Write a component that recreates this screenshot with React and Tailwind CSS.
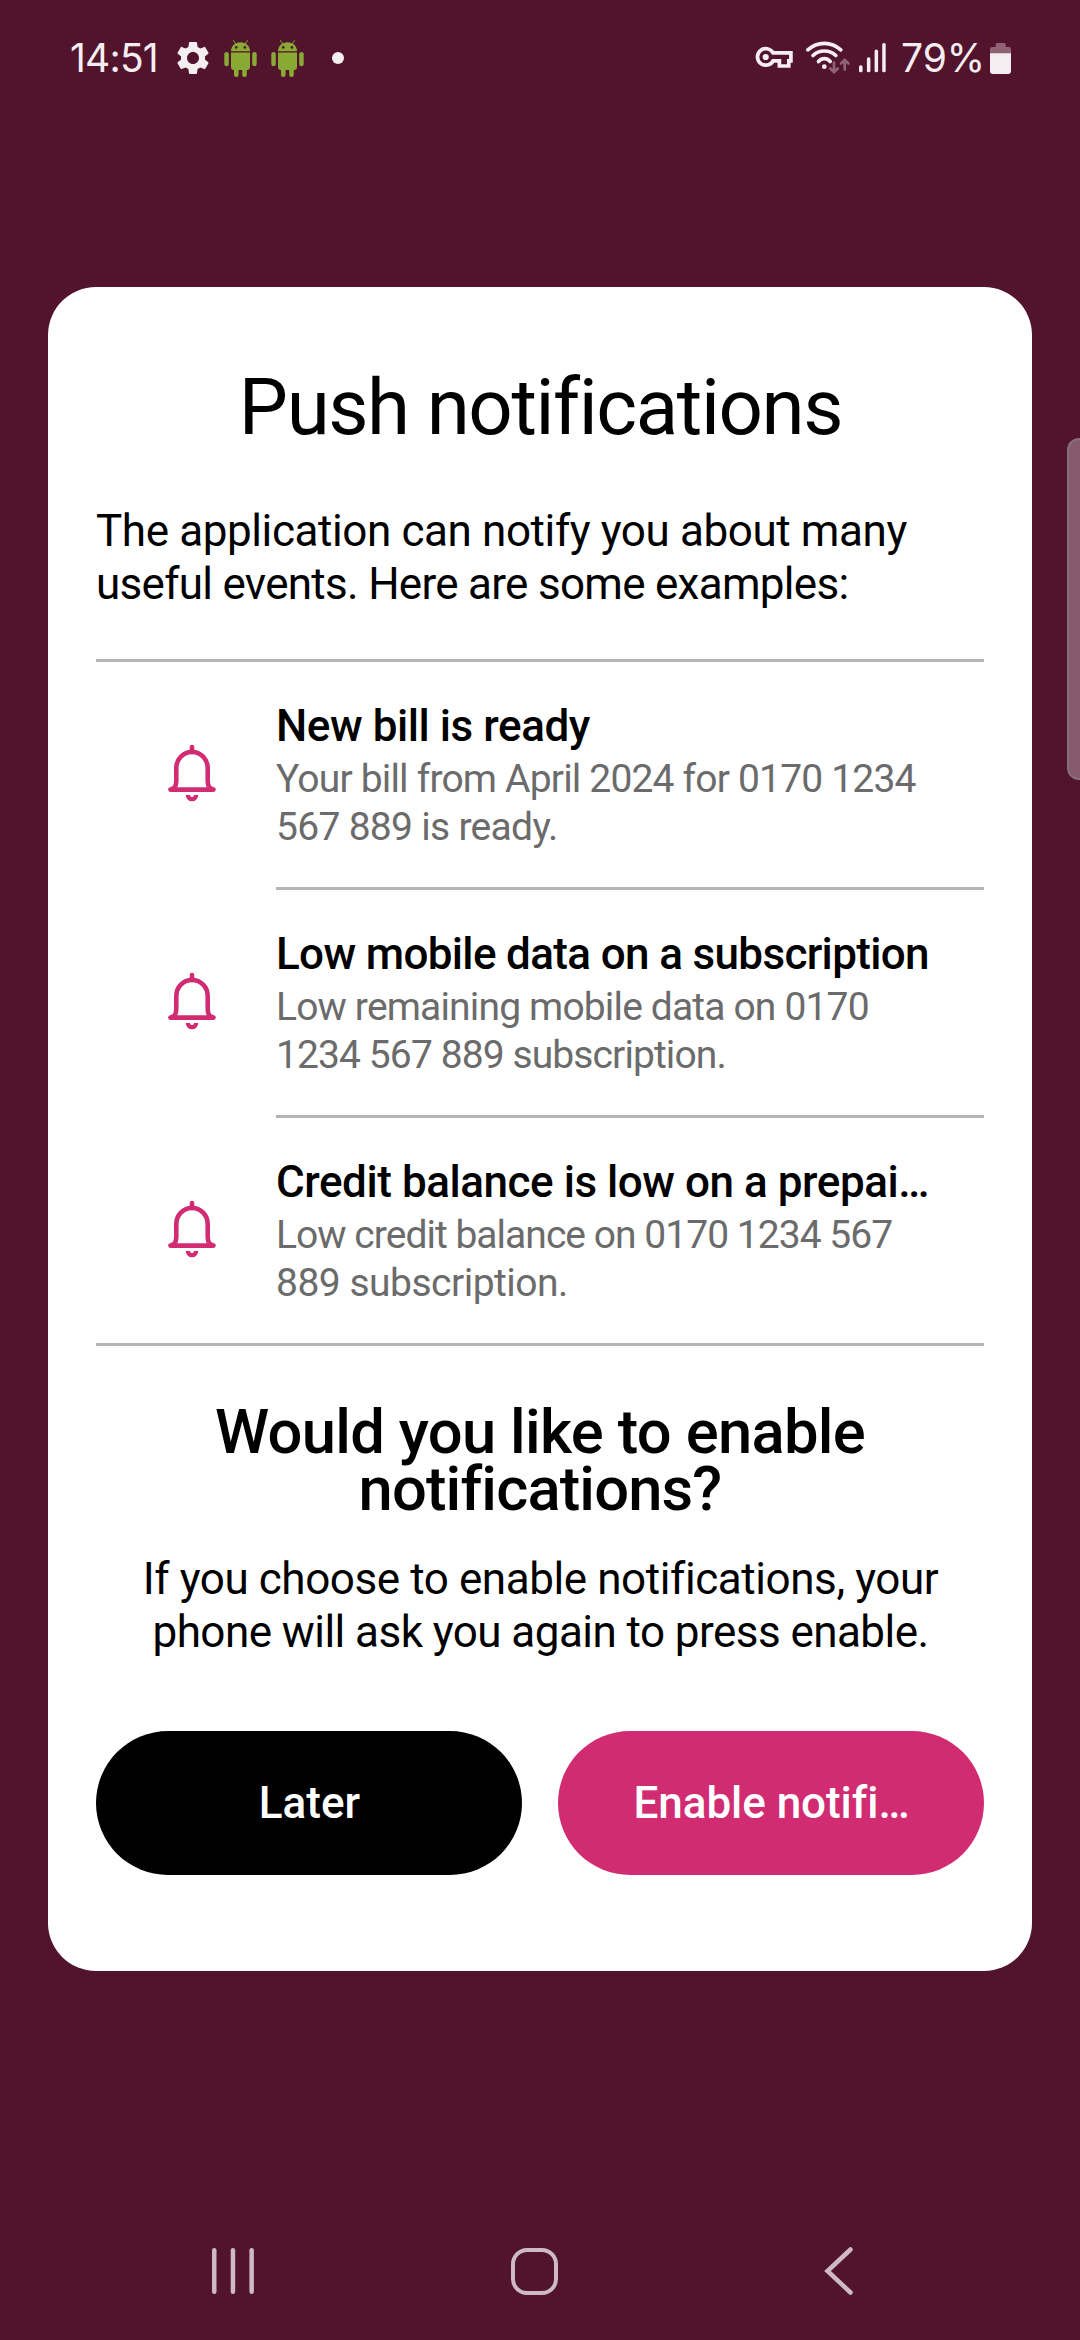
import { MdSettings } from "react-icons/md";

function Bell() {
  return (
    <svg className="mt-[82px] ml-[72px] h-[58px] w-12 shrink-0" viewBox="0 0 48 58" fill="none">
      <path d="M24 3V8" stroke="#d12b72" strokeWidth="4.6" strokeLinecap="round" />
      <path
        d="M24 8C15.3 8 8.3 15 8.3 24V36C8.3 41.5 7.5 44.4 2.5 45.6H45.5C40.5 44.4 39.7 41.5 39.7 36V24C39.7 15 32.7 8 24 8Z"
        stroke="#d12b72"
        strokeWidth="4.6"
        strokeLinejoin="round"
      />
      <path d="M17.7 51H22a2 2 0 0 0 4 0h4.3a6.3 6.3 0 0 1-12.6 0z" fill="#d12b72" />
    </svg>
  );
}

function Robot({ className }) {
  return (
    <svg className={className} viewBox="0 0 33 37" fill="#88aa35">
      <path d="M9.6 0.6L12 4.4M23.4 0.6L21 4.4" stroke="#88aa35" strokeWidth="1" strokeLinecap="round" />
      <path d="M7 11.2C7 6 11.2 2.3 16.5 2.3S26 6 26 11.2Z" />
      <circle cx="12.3" cy="7.4" r="1.3" fill="#52132c" />
      <circle cx="20.9" cy="7.4" r="1.3" fill="#52132c" />
      <path d="M7 12.4H26V27.6A2.4 2.4 0 0 1 23.6 30H9.4A2.4 2.4 0 0 1 7 27.6Z" />
      <rect x="0.3" y="12" width="4.5" height="14.3" rx="2.25" />
      <rect x="28.2" y="12" width="4.5" height="14.3" rx="2.25" />
      <rect x="10" y="26" width="4.6" height="11" rx="2.2" />
      <rect x="18.2" y="26" width="4.6" height="11" rx="2.2" />
    </svg>
  );
}

function StatusBar() {
  return (
    <div className="flex h-[116px] items-center pl-[70px] font-['Inter',sans-serif] text-[39px] leading-[48px] text-[#f4eef1]">
      <span className="w-[104px] whitespace-nowrap tracking-[-0.8px]">14:51</span>
      <MdSettings className="-ml-px size-10" />
      <Robot className="ml-[11px] h-[37px] w-[33px]" />
      <Robot className="ml-[14px] h-[37px] w-[33px]" />
      <span className="ml-[28px] size-3 rounded-full bg-[#f4eef1]" />
      <svg className="ml-[411px] h-[24px] w-[38px]" viewBox="0 0 38 24" fill="none" stroke="#f4eef1" strokeWidth="3.7">
        <path d="M18 6.8H35.9V14.8H33.8V20H24.4V14.8H18.1A8.3 8.3 0 1 1 18 6.8Z" />
        <circle cx="10.7" cy="11" r="3.1" fill="#f4eef1" stroke="none" />
      </svg>
      <svg className="ml-[12px] h-[36px] w-[45px]" viewBox="0 0 45 36" fill="none" strokeLinecap="round">
        <g stroke="#f4eef1" strokeWidth="3.7">
          <path d="M2.8 9.8Q10 3.3 19.3 3.3T35.8 9.8" />
          <path d="M8 15.5Q12.5 11 19.3 11T30.8 15.5" />
          <path d="M13.5 21.5Q16 18.7 19.3 18.7T25.2 21.5" />
        </g>
        <circle cx="19.3" cy="26.7" r="2.4" fill="#f4eef1" />
        <g stroke="#8f6274" strokeWidth="2.7">
          <path d="M29 22.5V32M25.3 28.5L29 32.2L32.7 28.5" />
          <path d="M39.7 29.7V20M36 23.5L39.7 19.8L43.4 23.5" />
        </g>
      </svg>
      <svg className="ml-[9px] h-[30px] w-[27px]" viewBox="0 0 27 30" fill="#f4eef1">
        <rect x="0" y="22.3" width="3.6" height="7" rx="1.6" />
        <rect x="7.9" y="14.3" width="3.5" height="15" rx="1.6" />
        <rect x="15.6" y="6.6" width="3.5" height="22.7" rx="1.6" />
        <rect x="23.2" y="0" width="3.5" height="29.3" rx="1.6" />
      </svg>
      <span className="ml-[15px] w-[89px] whitespace-nowrap">79%</span>
      <svg className="h-[31px] w-[21px]" viewBox="0 0 21 31">
        <path d="M5.7 4V1.5A1.5 1.5 0 0 1 7.2 0H14.2A1.5 1.5 0 0 1 15.7 1.5V4H19A2 2 0 0 1 21 6V11H0V6A2 2 0 0 1 2 4Z" fill="#8f6274" />
        <path d="M0 10.3H21V28A3 3 0 0 1 18 31H3A3 3 0 0 1 0 28Z" fill="#f4eef1" />
      </svg>
    </div>
  );
}

function Event({ title, children, last }) {
  return (
    <div className="flex">
      <Bell />
      <div className={`ml-[60px] h-[228px] w-[708px] pt-[38px] whitespace-nowrap ${last ? "" : "border-b-[3px] border-[#b5b5b5]"}`}>
        <div className="text-[44px] leading-[53px] font-medium">{title}</div>
        <div className="mt-[2px] text-[39px] leading-[48px] text-[#6b6b6b]">{children}</div>
      </div>
    </div>
  );
}

export default function App() {
  return (
    <div className="relative flex h-[2340px] w-[1080px] flex-col overflow-hidden bg-[#52132c] font-['Roboto',sans-serif] text-black">
      <StatusBar />

      <main className="mx-12 mt-[171px] h-[1684px] rounded-[48px] bg-white px-12 pt-[73px]">
        <h1 className="pl-px text-center text-[78px] leading-[96px] font-normal tracking-[-1.4px] whitespace-nowrap">Push notifications</h1>

        <p className="mt-[49px] text-[44px] leading-[53px] whitespace-nowrap">
          <span className="block tracking-[-0.4px]">The application can notify you about many</span>
          <span className="block tracking-[-0.71px]">useful events. Here are some examples:</span>
        </p>

        <section className="mt-[48px] border-t-[3px] border-[#b5b5b5]">
          <Event title={<span className="tracking-[-0.43px]">New bill is ready</span>}>
            <span className="block tracking-[-0.82px]">Your bill from April 2024 for 0170 1234</span>
            <span className="block tracking-[-0.7px]">567 889 is ready.</span>
          </Event>
          <Event title={<span className="tracking-[-0.65px]">Low mobile data on a subscription</span>}>
            <span className="block tracking-[-0.84px]">Low remaining mobile data on 0170</span>
            <span className="block tracking-[-0.9px]">1234 567 889 subscription.</span>
          </Event>
          <div className="h-[228px] border-b-[3px] border-[#b5b5b5]">
            <Event last title={<span className="tracking-[-0.45px]">Credit balance is low on a prepai…</span>}>
              <span className="block tracking-[-0.97px]">Low credit balance on 0170 1234 567</span>
              <span className="block tracking-[-0.5px]">889 subscription.</span>
            </Event>
          </div>
        </section>

        <h2 className="mt-[58px] text-center text-[61.5px] leading-[57px] font-medium whitespace-nowrap">
          <span className="block tracking-[-0.68px]">Would you like to enable</span>
          <span className="block tracking-[-0.85px]">notifications?</span>
        </h2>
        <p className="mt-[35px] pl-px text-center text-[44px] leading-[53px] whitespace-nowrap">
          <span className="block tracking-[-0.42px]">If you choose to enable notifications, your</span>
          <span className="block tracking-[-0.55px]">phone will ask you again to press enable.</span>
        </p>

        <div className="mt-[72px] grid grid-cols-2 gap-9 text-[44px] font-medium text-white">
          <button className="h-36 rounded-full bg-black pl-px">Later</button>
          <button className="h-36 rounded-full bg-[#d12b72] pl-px tracking-[-0.05px]">Enable notifi…</button>
        </div>
      </main>

      <nav className="mt-[276px] flex h-12 items-center">
        <svg className="ml-[212px] h-[46px] w-[42px]" viewBox="0 0 42 46" fill="#cdbac4">
          <rect x="0" width="4.5" height="46" rx="2.2" />
          <rect x="18.7" width="4.5" height="46" rx="2.2" />
          <rect x="37.4" width="4.5" height="46" rx="2.2" />
        </svg>
        <span className="ml-[257px] h-[47px] w-[47px] rounded-[16px] border-[4.5px] border-[#cdbac4]" />
        <svg className="ml-[266px] h-[48px] w-[30px]" viewBox="0 0 30 48" fill="none">
          <path d="M26.5 2.5L3.5 24L26.5 45.5" stroke="#cdbac4" strokeWidth="4.5" strokeLinecap="round" />
        </svg>
      </nav>

      <div className="absolute top-[438px] -right-1 h-[342px] w-[17px] rounded-l-[12px] border-2 border-[#86707a] bg-[#875a6c]" />
    </div>
  );
}
